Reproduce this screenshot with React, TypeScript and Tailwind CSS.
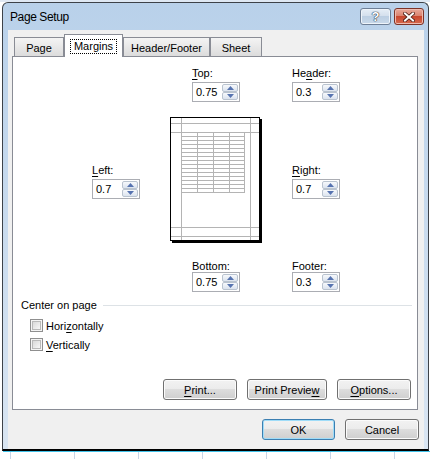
import React from 'react';

const Arrow = ({ down }: { down?: boolean }) => (
  <svg width="7" height="4" viewBox="0 0 7 4">
    <path d={down ? 'M0 0H7L3.5 4Z' : 'M3.5 0L7 4H0Z'} fill="#5673b0" />
  </svg>
);

const SpinBox = ({ value }: { value: string }) => (
  <div className="flex h-[20px] w-[48px] items-center border border-[#abadb3] bg-white pl-[3px] pr-px">
    <span className="flex-1 text-[11px] leading-[12px] text-black">{value}</span>
    <div className="flex h-[16px] w-[16px] flex-col">
      <div className="flex h-[8px] items-center justify-center rounded-[2px] border border-[#b9c3cf] bg-gradient-to-b from-[#f7f9fc] to-[#dbe3ee]">
        <Arrow />
      </div>
      <div className="flex h-[8px] items-center justify-center rounded-[2px] border border-[#b9c3cf] bg-gradient-to-b from-[#f7f9fc] to-[#dbe3ee]">
        <Arrow down />
      </div>
    </div>
  </div>
);

const Field = ({ label, value, tight }: { label: React.ReactNode; value: string; tight?: boolean }) => (
  <div className="flex flex-col">
    <div className={tight ? 'leading-[12px]' : 'mb-[3px] leading-[12px]'}>{label}</div>
    <SpinBox value={value} />
  </div>
);

const PagePreview = () => {
  const rows = Array.from({ length: 16 }, (_, i) => 15.5 + i * 4);
  const cols = [27.5, 43.5, 59.5, 74.5];
  return (
    <svg width="92" height="126" viewBox="0 0 92 126">
      <rect x="2" y="2" width="90" height="124" fill="#000" />
      <rect x="0.5" y="0.5" width="89" height="123" fill="#fff" stroke="#000" />
      <g stroke="#b4b4b4" strokeWidth="1">
        {rows.map((y) => (
          <line key={'r' + y} x1="11" y1={y} x2="75" y2={y} />
        ))}
        {cols.map((x) => (
          <line key={'c' + x} x1={x} y1="15" x2={x} y2="76" />
        ))}
        <line x1="11.5" y1="1" x2="11.5" y2="123" />
        <line x1="80.5" y1="1" x2="80.5" y2="123" />
        <line x1="1" y1="6.5" x2="89" y2="6.5" />
        <line x1="1" y1="15.5" x2="89" y2="15.5" />
        <line x1="1" y1="110.5" x2="89" y2="110.5" />
        <line x1="1" y1="119.5" x2="89" y2="119.5" />
      </g>
    </svg>
  );
};

const Tab = ({ label, w, active }: { label: string; w: string; active?: boolean }) =>
  active ? (
    <div className={`flex h-[23px] justify-center border border-b-0 border-[#898c95] bg-white pt-[4px] ${w}`}>
      <span className="h-[15px] border border-dotted border-black px-[3px] leading-[13px]">{label}</span>
    </div>
  ) : (
    <div className={`flex h-[20px] justify-center border border-[#898c95] bg-gradient-to-b from-[#f4f4f4] to-[#dcdcdc] pt-[4px] leading-[12px] ${w}`}>
      {label}
    </div>
  );

const Btn = ({ children, w, def }: { children: React.ReactNode; w: string; def?: boolean }) => (
  <button
    className={`flex h-[21px] items-center justify-center rounded-[3px] border bg-[linear-gradient(#f2f2f2_0%,#ebebeb_50%,#dddddd_50%,#cfcfcf_100%)] text-[11px] leading-[12px] text-black ${
      def ? 'border-[#3c7fb1] shadow-[inset_0_0_0_1px_#9fdcf8]' : 'border-[#707070] shadow-[inset_0_0_0_1px_#fbfbfb]'
    } ${w}`}
  >
    {children}
  </button>
);

const Check = ({ label }: { label: React.ReactNode }) => (
  <div className="flex h-[13px] items-center gap-[3px]">
    <div className="h-[13px] w-[13px] border border-[#8f8f8f] bg-[#f4f4f4] p-px">
      <div className="h-full w-full border border-[#b9b9b9] bg-gradient-to-br from-[#d9d9d9] to-[#f7f7f7]" />
    </div>
    <span className="leading-[12px]">{label}</span>
  </div>
);

export default function App() {
  return (
    <div className="h-[459px] w-[430px] overflow-hidden bg-white font-['Liberation_Sans',Arial,sans-serif] text-[11px] text-black">
      <div className="h-[2px] bg-[#dfe8f3]" />
      <div className="ml-[2px] flex h-[449px] w-[427px] flex-col rounded-t-[6px] border border-b-2 border-[#3d4249] border-b-black bg-gradient-to-b from-[#b9d1ea] to-[#d9e5f2] pl-[5px] pr-[4px]">
        {/* title bar */}
        <div className="-ml-[5px] -mr-[4px] flex h-[27px] shrink-0 items-center justify-between pl-[7px] pr-[4px]">
          <span className="text-[12px] leading-[14px] tracking-[-0.4px] text-black">Page Setup</span>
          <div className="flex items-center gap-[3px]">
            <div className="flex h-[17px] w-[31px] items-center justify-center rounded-[3px] border border-[#6e7f96] bg-[linear-gradient(#e6eef7_0%,#d2deec_50%,#bccfe3_50%,#c9d9ea_100%)] shadow-[inset_0_0_0_1px_#eef4fa]">
              <span className="text-[13px] font-bold leading-[13px] text-white [text-shadow:0_0_1px_#273445,0_0_1px_#273445,0_0_1px_#273445]">?</span>
            </div>
            <div className="flex h-[17px] w-[30px] items-center justify-center rounded-[3px] border border-[#7d3327] bg-[linear-gradient(#e9a99b_0%,#d9806c_50%,#c9472f_50%,#d66a4f_100%)] shadow-[inset_0_0_0_1px_#eebbb0]">
              <svg width="12" height="10" viewBox="0 0 12 10">
                <path d="M2 1.5L10 8.5M10 1.5L2 8.5" stroke="#4a1a12" strokeWidth="3.6" strokeLinecap="square" />
                <path d="M2 1.5L10 8.5M10 1.5L2 8.5" stroke="#fff" strokeWidth="2" strokeLinecap="square" />
              </svg>
            </div>
          </div>
        </div>

        {/* client */}
        <div className="flex flex-1 flex-col bg-[#f0f0f0] pl-[4px] pr-[5px]">
          <div className="relative z-10 ml-[2px] flex h-[27px] items-end">
            <Tab label="Page" w="w-[50px]" />
            <Tab label="Margins" w="w-[59px]" active />
            <Tab label="Header/Footer" w="w-[87px]" />
            <Tab label="Sheet" w="w-[52px]" />
          </div>

          <div className="-mt-px flex h-[354px] w-[406px] flex-col border border-[#898c95] bg-white pb-[9px]">
            <div className="grid grid-cols-[48px_92px_48px] gap-x-[30px] pl-[79px] pt-[10px]">
              <div />
              <div className="pl-[22px]">
                <Field label={<><u className="underline-offset-[2px]">T</u>op:</>} value="0.75" />
              </div>
              <Field label={<>He<u className="underline-offset-[2px]">a</u>der:</>} value="0.3" />

              <div className="self-center">
                <Field label={<><u className="underline-offset-[2px]">L</u>eft:</>} value="0.7" />
              </div>
              <div className="mb-[17px] mt-[15px]">
                <PagePreview />
              </div>
              <div className="self-center">
                <Field label={<><u className="underline-offset-[2px]">R</u>ight:</>} value="0.7" />
              </div>

              <div />
              <div className="pl-[22px]">
                <Field tight label={<><u className="underline-offset-[2px]">B</u>ottom:</>} value="0.75" />
              </div>
              <Field tight label={<><u className="underline-offset-[2px]">F</u>ooter:</>} value="0.3" />
            </div>

            <div className="mt-[7px] flex items-center pl-[8px] pr-[5px]">
              <span className="leading-[12px]">Center on page</span>
              <div className="ml-[6px] h-px flex-1 bg-[#dde2e6]" />
            </div>

            <div className="mt-[8px] flex flex-col gap-[6px] pl-[17px]">
              <Check label={<>Hori<u className="underline-offset-[2px]">z</u>ontally</>} />
              <Check label={<><u className="underline-offset-[2px]">V</u>ertically</>} />
            </div>

            <div className="mt-auto flex justify-end gap-[10px] pr-[6px]">
              <Btn w="w-[74px]"><span><u className="underline-offset-[2px]">P</u>rint...</span></Btn>
              <Btn w="w-[80px]"><span>Print Previe<u className="underline-offset-[2px]">w</u></span></Btn>
              <Btn w="w-[74px]"><span><u className="underline-offset-[2px]">O</u>ptions...</span></Btn>
            </div>
          </div>

          <div className="mt-[9px] flex justify-end gap-[10px]">
            <Btn w="w-[73px]" def>OK</Btn>
            <Btn w="w-[74px]">Cancel</Btn>
          </div>
        </div>
      </div>
      <div className="ml-[3px] h-px w-[427px] bg-[#3fc1e8]" />
      <div className="flex h-[8px] pl-[10px]">
        {Array.from({ length: 7 }, (_, i) => (
          <div key={i} className="h-full w-[64px] shrink-0 border-l border-[#c8d5e7]" />
        ))}
      </div>
    </div>
  );
}
